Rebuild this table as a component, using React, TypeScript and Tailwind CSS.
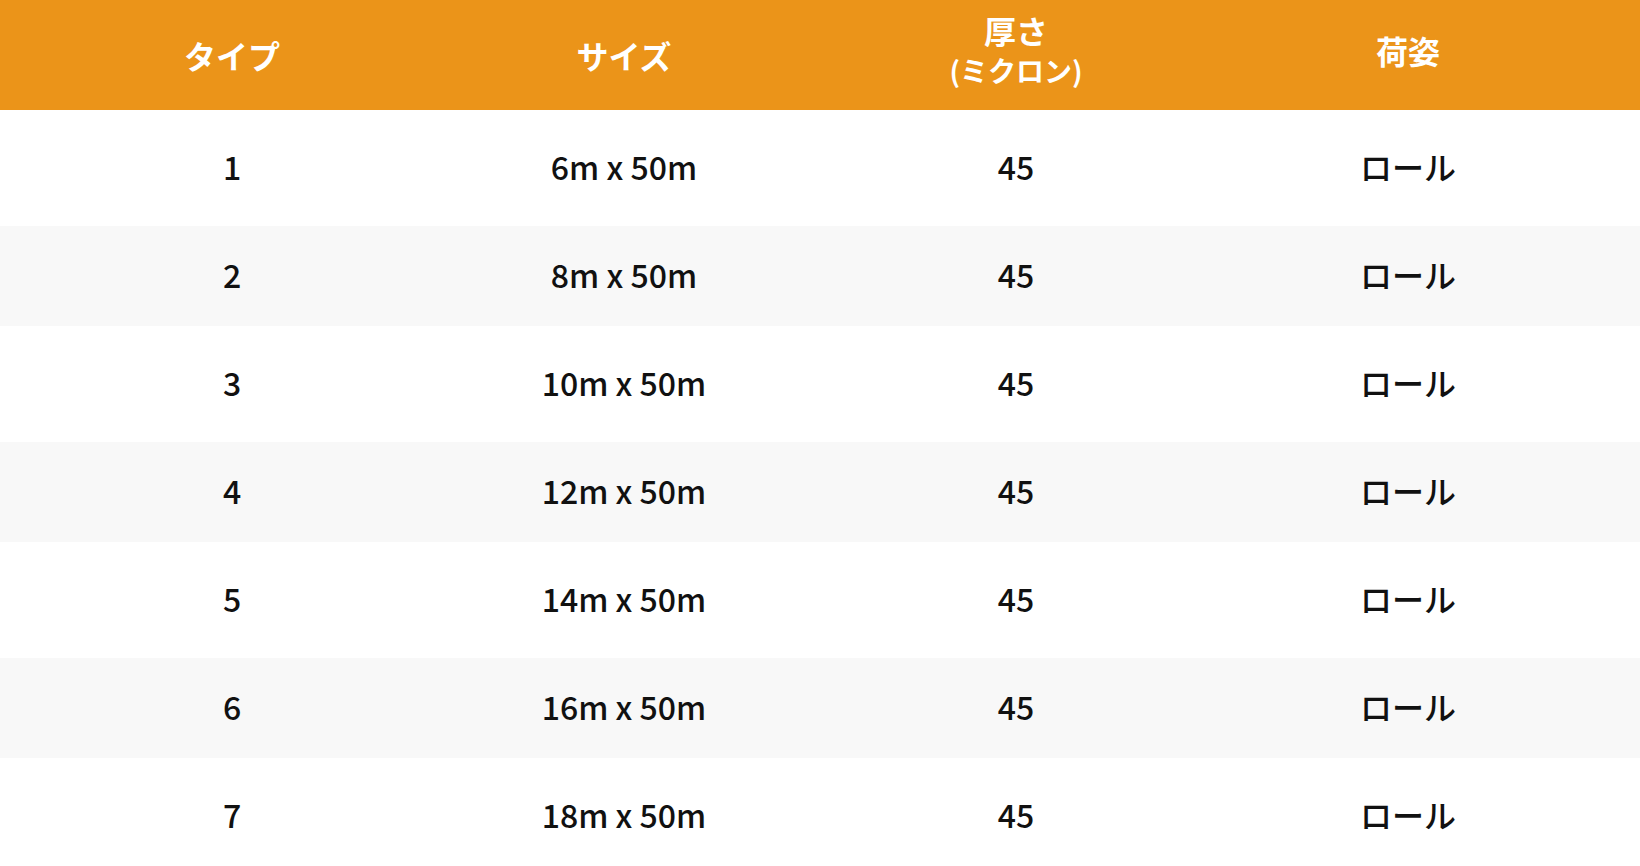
const rows = [
  { type: "1", size: "6m x 50m", thickness: "45", packing: "ロール" },
  { type: "2", size: "8m x 50m", thickness: "45", packing: "ロール" },
  { type: "3", size: "10m x 50m", thickness: "45", packing: "ロール" },
  { type: "4", size: "12m x 50m", thickness: "45", packing: "ロール" },
  { type: "5", size: "14m x 50m", thickness: "45", packing: "ロール" },
  { type: "6", size: "16m x 50m", thickness: "45", packing: "ロール" },
  { type: "7", size: "18m x 50m", thickness: "45", packing: "ロール" },
]

export default function App() {
  return (
    <div className="w-full min-h-screen bg-white font-['Noto_Sans_CJK_JP','Noto_Sans',sans-serif]">
      <div className="bg-[#eb9419] text-white font-bold text-[32px] leading-[40px]">
        <div className="grid grid-cols-4 px-[36px] h-[110px] items-center text-center">
          <div>タイプ</div>
          <div>サイズ</div>
          <div className="-mt-[10px] flex flex-col items-center">
            <span className="leading-[40px]">厚さ</span>
            <span className="text-[28px] leading-[40px]">(ミクロン)</span>
          </div>
          <div className="-mt-[10px]">荷姿</div>
        </div>
      </div>
      {rows.map((row, i) => (
        <div
          key={row.type}
          className={i % 2 === 1 ? "bg-[#f8f8f8]" : "bg-white"}
        >
          <div
            className={
              "grid grid-cols-4 px-[36px] items-center text-center text-[32px] font-medium text-[#111111] " +
              (i % 2 === 1 ? "h-[100px]" : "h-[116px]")
            }
          >
            <div className="-mt-[4px]">{row.type}</div>
            <div className="-mt-[4px]">{row.size}</div>
            <div className="-mt-[4px]">{row.thickness}</div>
            <div className="-mt-[4px]">{row.packing}</div>
          </div>
        </div>
      ))}
    </div>
  )
}
